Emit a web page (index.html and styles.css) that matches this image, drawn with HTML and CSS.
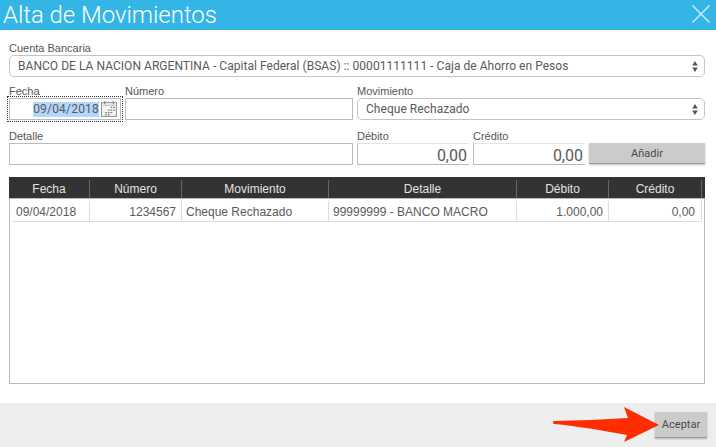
FILE: index.html
```html
<!DOCTYPE html>
<html lang="es">
<head>
<meta charset="utf-8">
<title>Alta de Movimientos</title>
<link rel="stylesheet" href="styles.css">
</head>
<body>
<div class="dialog">
  <header class="titlebar">
    <h1>Alta de Movimientos</h1>
    <svg class="close" width="20" height="20" viewBox="0 0 20 20"><path d="M1.500 1.500 18.500 18.500M18.500 1.500 1.500 18.500" fill="none" stroke="#d3eefa" stroke-width="1.400"/></svg>
  </header>
  <main class="form">
    <div class="field full">
      <label>Cuenta Bancaria</label>
      <div class="select"><span>BANCO DE LA NACION ARGENTINA - Capital Federal (BSAS) :: 00001111111 - Caja de Ahorro en Pesos</span>
        <svg width="6" height="11" viewBox="0 0 6 11"><path d="M3 0 5.800 4.400H.2ZM3 11 .2 6.600H5.800Z" fill="#555"/></svg></div>
    </div>
    <div class="row row2">
      <div class="field w-fecha">
        <label>Fecha</label>
        <div class="input date"><span class="sel">09/04/2018</span>
          <svg class="cal" width="16" height="16" viewBox="0 0 15 15"><rect x=".5" y="1.500" width="14" height="13" fill="#f4f4f4" stroke="#999"/><path d="M3.500 0v3M11.500 0v3" stroke="#888"/><path d="M2 4h11" stroke="#bbb"/><path d="M9 6h1.500M11.500 6h1.500M6.500 8.500h1.500M9 8.500h1.500M11.500 8.500h1.500M4 11h1.500M6.500 11h1.500M9 11h1.500M4 13h1.500M6.500 13h1.500" stroke="#777" stroke-width="1.200"/></svg>
        </div>
      </div>
      <div class="field w-num"><label>Número</label><div class="input"></div></div>
      <div class="field w-mov">
        <label>Movimiento</label>
        <div class="select"><span>Cheque Rechazado</span>
          <svg width="6" height="11" viewBox="0 0 6 11"><path d="M3 0 5.800 4.400H.2ZM3 11 .2 6.600H5.800Z" fill="#555"/></svg></div>
      </div>
    </div>
    <div class="row row3">
      <div class="field w-det"><label>Detalle</label><div class="input"></div></div>
      <div class="field w-amt"><label>Débito</label><div class="input amount">0,00</div></div>
      <div class="field w-amt"><label>Crédito</label><div class="input amount">0,00</div></div>
      <button class="btn add">Añadir</button>
    </div>
    <div class="grid">
      <div class="grid-head">
        <div class="hc">Fecha</div><div class="hc">Número</div><div class="hc">Movimiento</div><div class="hc">Detalle</div><div class="hc">Débito</div><div class="hc">Crédito</div>
      </div>
      <div class="grid-row">
        <div class="cell">09/04/2018</div><div class="cell r">1234567</div><div class="cell">Cheque Rechazado</div><div class="cell">99999999 - BANCO MACRO</div><div class="cell r">1.000,00</div><div class="cell r last">0,00</div>
      </div>
    </div>
  </main>
  <footer class="actions">
    <button class="btn accept">Aceptar</button>
  </footer>
  <svg class="arrow" width="108" height="40" viewBox="0 0 108 40"><path d="M2 16C25 15.500 52 14.500 76 13L72 2 107 20 72 37 75 30C50 25.500 25 21 2 19 .5 18 .5 16.500 2 16Z" fill="#ff2d00"/></svg>
</div>
</body>
</html>
```
FILE: styles.css
```css
* { box-sizing: border-box; }
html, body { margin: 0; padding: 0; background: #fff; }
.dialog { position: relative; width: 716px; height: 447px; overflow: hidden; display: flex; flex-direction: column; font-family: Roboto, sans-serif; color: #555; }
.titlebar { height: 30px; flex: none; background: #33b5e5; display: flex; align-items: center; justify-content: space-between; padding: 0 5px 0 3px; }
.titlebar h1 { margin: 0; font-family: Roboto, sans-serif; font-weight: 300; font-size: 24px; line-height: 30px; color: #fff; letter-spacing: -.05px; }
.close { margin-bottom: 2px; }
.form { flex: 1; padding: 11px 11px 0 9px; display: flex; flex-direction: column; }
.field { display: flex; flex-direction: column; }
label { font-family: "Liberation Sans", Arial, sans-serif; font-size: 11px; line-height: 14px; height: 14px; color: #555; }
.row { display: flex; gap: 4px; }
.row2 { margin-top: 7px; }
.row3 { margin-top: 9px; }
.select { height: 22px; border: 1px solid #c4c4c4; border-radius: 5px; display: flex; align-items: center; justify-content: space-between; padding: 0 6px 0 8px; font-size: 12px; letter-spacing: .04px; color: #5a5a5a; background: #fff; }
.input { height: 22px; border: 1px solid #bbb; background: #fff; font-size: 12px; }
.w-fecha { width: 112px; }
.w-num { width: 228px; }
.w-mov { width: 348px; }
.w-det { width: 344px; }
.w-amt { width: 112px; }
.date { display: flex; align-items: center; justify-content: flex-end; padding-right: 3px; gap: 2px; outline: 1px dotted #234; outline-offset: 1px; font-size: 12px; letter-spacing: .2px; }
.sel { background: #b4d5fe; color: #5a5a5a; line-height: 15px; }
.cal { flex: none; }
.amount { border-top-color: #e4e4e4; border-right: 0; text-align: right; font-size: 16px; line-height: 23px; padding-right: 2px; color: #5a5a5a; }
.btn { border: 0; background: #cbcbcb; border-bottom: 1px solid #999; box-shadow: 0 1px 2px rgba(0,0,0,.25); font-family: Roboto, sans-serif; font-size: 11px; color: #4a4a4a; padding: 0; }
.add { width: 116px; height: 21px; align-self: flex-end; margin-bottom: 1px; }
.grid { margin-top: 12px; height: 207px; width: 696px; border: 1px solid #bbb; border-top: 0; border-left-width: 1px; font-family: "Liberation Sans", Arial, sans-serif; font-size: 12px; }
.grid-head { margin-left: -1px; margin-right: -1px; height: 22px; background: #333; border-bottom: 1px solid #bbb; padding-top: 3px; display: grid; grid-template-columns: 81px 92px 147px 188px 92px 93px; }
.hc { height: 18px; line-height: 18px; text-align: center; color: #e2e2e2; border-right: 1px solid #666; }
.grid-row { margin-left: 2px; width: 690px; padding-top: 2px; border-bottom: 1px solid #ddd; display: grid; grid-template-columns: 78px 92px 147px 188px 92px 93px; }
.cell { height: 20px; line-height: 22px; padding: 0 5px 0 4px; border-right: 1px solid #ddd; color: #5a5a5a; white-space: nowrap; }
.r { text-align: right; }
.last { padding-right: 6px; }
.actions { height: 44px; flex: none; background: #eee; display: flex; justify-content: flex-end; padding: 9px 9px 0 0; }
.accept { width: 52px; height: 26px; }
.arrow { position: absolute; left: 552px; top: 405px; }
```
